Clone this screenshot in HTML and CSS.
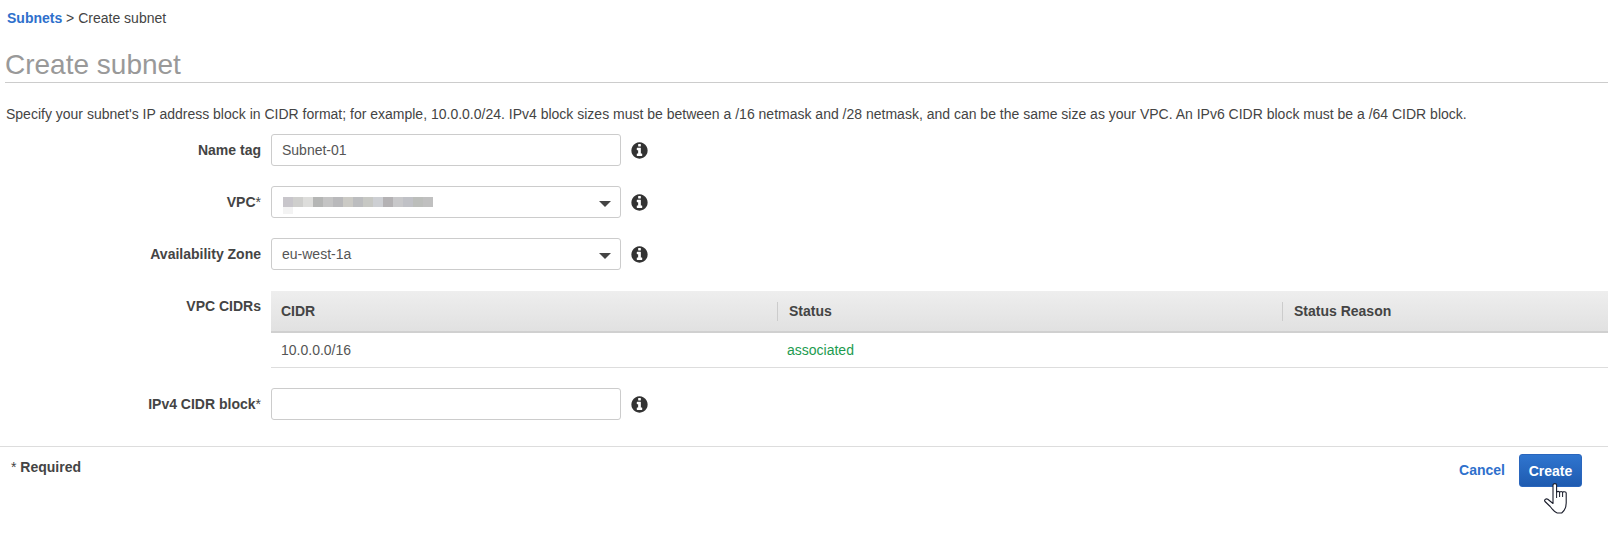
FILE: index.html
```html
<!DOCTYPE html>
<html lang="en">
<head>
<meta charset="utf-8">
<title>Create subnet</title>
<link rel="stylesheet" href="styles.css">
</head>
<body>
<svg class="defs" width="0" height="0" aria-hidden="true">
  <symbol id="info" viewBox="0 0 1792 1792">
    <path d="M1152 1376v-160q0-14-9-23t-23-9h-96v-512q0-14-9-23t-23-9h-320q-14 0-23 9t-9 23v160q0 14 9 23t23 9h96v320h-96q-14 0-23 9t-9 23v160q0 14 9 23t23 9h448q14 0 23-9t9-23zm-128-896v-160q0-14-9-23t-23-9h-192q-14 0-23 9t-9 23v160q0 14 9 23t23 9h192q14 0 23-9t9-23zm640 416q0 209-103 385.5t-279.5 279.5-385.5 103-385.5-103-279.5-279.5-103-385.5 103-385.5 279.5-279.5 385.5-103 385.5 103 279.5 279.5 103 385.5z"/>
  </symbol>
</svg>
<nav class="crumbs"><a class="crumb-link">Subnets</a> &gt; Create subnet</nav>
<h1 class="title">Create subnet</h1>
<p class="intro">Specify your subnet's IP address block in CIDR format; for example, 10.0.0.0/24. IPv4 block sizes must be between a /16 netmask and /28 netmask, and can be the same size as your VPC. An IPv6 CIDR block must be a /64 CIDR block.</p>
<form class="form">
  <div class="row">
    <label class="label">Name tag</label>
    <div class="field">Subnet-01</div>
    <svg class="info"><use href="#info"/></svg>
  </div>
  <div class="row">
    <label class="label">VPC<span class="star">*</span></label>
    <div class="field select">
      <div class="pixels"><div class="pixels-top"></div><div class="pixels-bottom"></div></div>
      <span class="caret"></span>
    </div>
    <svg class="info"><use href="#info"/></svg>
  </div>
  <div class="row">
    <label class="label">Availability Zone</label>
    <div class="field select">eu-west-1a<span class="caret"></span></div>
    <svg class="info"><use href="#info"/></svg>
  </div>
  <div class="row row-table">
    <label class="label label-top">VPC CIDRs</label>
    <div class="table">
      <div class="thead">
        <div class="th">CIDR</div>
        <div class="th th-sep">Status</div>
        <div class="th th-sep">Status Reason</div>
      </div>
      <div class="tbody">
        <div class="td">10.0.0.0/16</div>
        <div class="td td-status">associated</div>
        <div class="td"></div>
      </div>
    </div>
  </div>
  <div class="row">
    <label class="label">IPv4 CIDR block<span class="star">*</span></label>
    <div class="field"></div>
    <svg class="info"><use href="#info"/></svg>
  </div>
</form>
<footer class="footer">
  <div class="required"><span class="star">*</span> Required</div>
  <div class="actions">
    <a class="cancel">Cancel</a>
    <button class="create" type="button">Create</button>
  </div>
</footer>
<svg class="hand" viewBox="0 0 24 32" width="24" height="32" aria-hidden="true">
  <path d="M9 2c0-1.800 3.600-1.800 3.600 0v7.500c0-1.500 3-1.500 3 0 0-1.300 3-1.300 3 0 0-1.200 3.600-1 3.600.6V20c0 4.500-2 8-4.500 10h-4.500c-3-1-5-4-7-6.500L1 18.500c-1.200-1.500 1-3.500 2.800-2.200L9 20.500z" fill="#fff" stroke="#1a1d2b" stroke-width="1.100" stroke-linejoin="round"/>
  <path d="M12.600 9.500V15M15.600 9.500V14M18.600 9.500V14" fill="none" stroke="#1a1d2b" stroke-width="1"/>
</svg>
</body>
</html>
```
FILE: styles.css
```css
* { box-sizing: border-box; }
html, body { margin: 0; padding: 0; }
body {
  position: relative;
  height: 533px;
  overflow: hidden;
  background: #fff;
  color: #444;
  font-family: "Liberation Sans", Arial, sans-serif;
  font-size: 14px;
  line-height: 16px;
}
.defs { position: absolute; }
.crumbs { padding: 10px 0 0 7px; height: 47px; }
.crumb-link { color: #2e70cc; font-weight: 700; }
.title {
  margin: 0 0 0 5px;
  height: 36px;
  border-bottom: 1px solid #ccc;
  color: #999;
  font-size: 28px;
  font-weight: 400;
  line-height: 36px;
}
.intro { margin: 0; padding: 23px 0 0 6px; height: 51px; white-space: nowrap; }
.form { display: flex; flex-direction: column; gap: 20px; }
.row { display: flex; align-items: center; height: 32px; }
.label {
  flex: 0 0 261px;
  text-align: right;
  font-weight: 700;
  color: #444;
}
.star { font-weight: 400; }
.field {
  position: relative;
  flex: 0 0 350px;
  height: 32px;
  margin-left: 10px;
  padding: 0 10px;
  border: 1px solid #ccc;
  border-radius: 3px;
  line-height: 30px;
  color: #555;
  background: #fff;
}
.select { padding-right: 30px; }
.caret {
  position: absolute;
  right: 9px;
  top: 14px;
  border-left: 6px solid transparent;
  border-right: 6px solid transparent;
  border-top: 6px solid #444;
}
.info { width: 19px; height: 19px; margin-left: 9px; fill: #333; }
.pixels { margin: 10px 0 0 1px; }
.pixels-top {
  width: 150px;
  height: 10px;
  background: linear-gradient(90deg,
    #c8c6cb 0 10px, #cfcfcd 10px 20px, #dddddb 20px 30px, #b5b6b5 30px 40px,
    #c4c4c4 40px 50px, #b9b9bb 50px 60px, #cbcac5 60px 70px, #bcbdbf 70px 80px,
    #c7c8c4 80px 90px, #cdcfd3 90px 100px, #b4b2b4 100px 110px, #c8c8ca 110px 120px,
    #c0c1c6 120px 130px, #bcbebb 130px 140px, #c0c0c0 140px 150px);
}
.pixels-bottom { width: 10px; height: 7px; background: #f3f3f3; }
.row-table { height: 77px; margin-top: 1px; align-items: flex-start; }
.label-top { padding-top: 7px; }
.table { flex: 1; margin-left: 10px; }
.thead, .tbody { display: grid; grid-template-columns: 506px 505px 1fr; }
.thead {
  height: 42px;
  align-items: center;
  background: linear-gradient(#eee, #e1e1e1);
  border-bottom: 2px solid #d0d0d0;
}
.th { padding-left: 10px; font-weight: 700; color: #444; }
.th-sep { padding-left: 11px; border-left: 1px solid #ccc; line-height: 19px; }
.tbody { height: 35px; align-items: center; border-bottom: 1px solid #ddd; }
.td { padding-left: 10px; color: #555; }
.td-status { color: #1d9b4f; }
.footer {
  display: flex;
  justify-content: space-between;
  height: 87px;
  margin-top: 26px;
  border-top: 1px solid #ddd;
}
.required { padding: 12px 0 0 11px; font-weight: 700; }
.actions { display: flex; align-items: flex-start; gap: 14px; padding: 7px 26px 0 0; }
.cancel { color: #2e70cc; font-weight: 700; line-height: 33px; }
.create {
  width: 63px;
  height: 33px;
  padding: 0;
  border: 1px solid #2a66bd;
  border-radius: 3px;
  background: linear-gradient(#2f75cf, #1f5bb0);
  color: #fff;
  font: 700 14px "Liberation Sans", Arial, sans-serif;
}
.hand { position: absolute; left: 1544px; top: 483px; }
```
